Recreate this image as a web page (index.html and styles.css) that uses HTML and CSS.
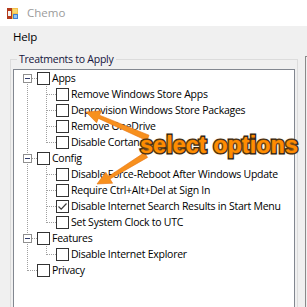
FILE: index.html
```html
<!DOCTYPE html>
<html>
<head>
<meta charset="utf-8">
<title>Chemo</title>
<link rel="stylesheet" href="styles.css">
</head>
<body>
<div class="window">
  <div class="titlebar">
    <svg class="appicon" width="11" height="11" viewBox="0 0 11 11">
      <rect x="0" y="0" width="11" height="11" fill="#f2c14e"/>
      <rect x="0" y="0" width="5" height="11" fill="#b33a1c"/>
      <rect x="1" y="3" width="3" height="5" fill="#f4f4f4"/>
      <rect x="6" y="1" width="4" height="4" fill="#f8d870"/>
      <rect x="6" y="6" width="5" height="5" fill="#3f7fd0"/>
      <rect x="7" y="7" width="3" height="3" fill="#8fc3f2"/>
    </svg>
    <span class="title">Chemo</span>
  </div>
  <div class="menubar"><span class="menu-item">Help</span></div>
  <div class="client">
    <fieldset class="group">
      <legend class="group-title">Treatments to Apply</legend>
      <div class="tree">
        <div class="row">
          <span class="g v-bot h"><span class="exp"></span></span>
          <span class="cb"></span><span class="lbl">Apps</span>
        </div>
        <div class="row">
          <span class="g v-full"></span><span class="g v-full h"></span>
          <span class="cb"></span><span class="lbl">Remove Windows Store Apps</span>
        </div>
        <div class="row">
          <span class="g v-full"></span><span class="g v-full h"></span>
          <span class="cb"></span><span class="lbl">Deprovision Windows Store Packages</span>
        </div>
        <div class="row">
          <span class="g v-full"></span><span class="g v-full h"></span>
          <span class="cb"></span><span class="lbl">Remove OneDrive</span>
        </div>
        <div class="row">
          <span class="g v-full"></span><span class="g v-top h"></span>
          <span class="cb"></span><span class="lbl">Disable Cortana</span>
        </div>
        <div class="row">
          <span class="g v-full h"><span class="exp"></span></span>
          <span class="cb"></span><span class="lbl">Config</span>
        </div>
        <div class="row">
          <span class="g v-full"></span><span class="g v-full h"></span>
          <span class="cb"></span><span class="lbl">Disable Force-Reboot After Windows Update</span>
        </div>
        <div class="row">
          <span class="g v-full"></span><span class="g v-full h"></span>
          <span class="cb"></span><span class="lbl">Require Ctrl+Alt+Del at Sign In</span>
        </div>
        <div class="row">
          <span class="g v-full"></span><span class="g v-full h"></span>
          <span class="cb checked"><svg width="11" height="11" viewBox="0 0 11 11"><path d="M1.5 5.5 L4.2 8.2 L9.5 2.5" fill="none" stroke="#3c3c3c" stroke-width="1.2"/></svg></span><span class="lbl">Disable Internet Search Results in Start Menu</span>
        </div>
        <div class="row">
          <span class="g v-full"></span><span class="g v-top h"></span>
          <span class="cb"></span><span class="lbl">Set System Clock to UTC</span>
        </div>
        <div class="row">
          <span class="g v-full h"><span class="exp"></span></span>
          <span class="cb"></span><span class="lbl">Features</span>
        </div>
        <div class="row">
          <span class="g v-full"></span><span class="g v-top h"></span>
          <span class="cb"></span><span class="lbl">Disable Internet Explorer</span>
        </div>
        <div class="row">
          <span class="g v-top h"></span>
          <span class="cb"></span><span class="lbl">Privacy</span>
        </div>
      </div>
    </fieldset>
    <div class="side"></div>
  </div>
  <svg class="arrows" width="307" height="307" viewBox="0 0 307 307">
    <polygon points="86,112 101.4,110.8 99.6,115.2 149,135.2 147,140.8 98.4,118.4 96.6,122.8" fill="#f7901e" stroke="#e87410" stroke-width="0.6"/>
    <polygon points="97,184 112.6,183.2 110,179 147.6,157.4 144.4,152.6 108.4,176.4 105.8,172.2" fill="#f7901e" stroke="#e87410" stroke-width="0.6"/>
  </svg>
  <div class="callout">select options</div>
</div>
</body>
</html>
```

FILE: styles.css
```css
html, body {
  margin: 0;
  padding: 0;
}
body {
  width: 307px;
  height: 307px;
  overflow: hidden;
  background: #f0f0f0;
  font-family: "Open Sans", "Liberation Sans", Arial, sans-serif;
}
.window {
  position: relative;
  width: 307px;
  height: 307px;
  overflow: hidden;
  background: #f0f0f0;
}
.titlebar {
  height: 26px;
  background: #ffffff;
  display: flex;
  align-items: center;
  padding-left: 7px;
  box-sizing: border-box;
}
.appicon {
  display: block;
  flex: none;
}
.title {
  margin-left: 9px;
  font-size: 11.5px;
  color: #9b9b9b;
  line-height: 14px;
}
.menubar {
  height: 22px;
  display: flex;
  align-items: center;
  padding-left: 13px;
  box-sizing: border-box;
}
.menu-item {
  font-size: 11.5px;
  letter-spacing: -0.2px;
  color: #000;
  line-height: 14px;
}
.client {
  display: flex;
  align-items: flex-start;
  padding-left: 10px;
}
.group {
  flex: none;
  width: 288px;
  height: 280px;
  box-sizing: border-box;
  margin: 5px 0 0 0;
  padding: 0 2px 0 2px;
  border: 1px solid #dcdcdc;
  min-width: 0;
}
.group-title {
  font-size: 10.5px;
  letter-spacing: -0.25px;
  line-height: 13px;
  color: #14143c;
  padding: 0 2px;
  margin-left: 4px;
}
.side {
  flex: none;
  margin-left: 7px;
  margin-top: 8px;
  width: 20px;
  height: 260px;
  border-left: 1px solid #8a8a8a;
  border-top: 1px solid #8a8a8a;
  box-sizing: border-box;
}
.tree {
  margin-top: 3px;
  width: 282px;
  height: 260px;
  box-sizing: border-box;
  border: 1px solid #828790;
  background: #ffffff;
  padding: 0 0 0 4px;
}
.row {
  height: 16px;
  display: flex;
  align-items: center;
}
.g {
  position: relative;
  flex: none;
  width: 19px;
  height: 16px;
}
.v-full::before,
.v-top::before,
.v-bot::before {
  content: "";
  position: absolute;
  left: 9px;
  width: 1px;
  background: repeating-linear-gradient(to bottom, #a0a0a0 0 1px, transparent 1px 2px);
}
.v-full::before { top: 0; height: 16px; }
.v-top::before { top: 0; height: 9px; }
.v-bot::before { top: 8px; height: 8px; }
.h::after {
  content: "";
  position: absolute;
  left: 10px;
  top: 8px;
  width: 9px;
  height: 1px;
  background: repeating-linear-gradient(to right, #a0a0a0 0 1px, transparent 1px 2px);
}
.exp {
  position: absolute;
  left: 5px;
  top: 4px;
  width: 9px;
  height: 9px;
  box-sizing: border-box;
  border: 1px solid #8f8f8f;
  background: #fff;
  z-index: 1;
}
.exp::after {
  content: "";
  position: absolute;
  left: 1px;
  top: 3px;
  width: 5px;
  height: 1px;
  background: #2f3a6a;
}
.cb {
  flex: none;
  width: 13px;
  height: 13px;
  box-sizing: border-box;
  border: 1px solid #333333;
  background: #fff;
  display: flex;
  align-items: center;
  justify-content: center;
}
.cb svg {
  display: block;
}
.lbl {
  margin-left: 2px;
  font-family: "Open Sans", "Liberation Sans", sans-serif;
  font-size: 10.5px;
  letter-spacing: -0.25px;
  line-height: 13px;
  color: #000;
  white-space: nowrap;
}
.arrows {
  position: absolute;
  left: 0;
  top: 0;
  pointer-events: none;
}
.callout {
  position: absolute;
  left: 140px;
  top: 134px;
  font-family: "Liberation Sans", Arial, sans-serif;
  font-weight: bold;
  font-size: 23.5px;
  line-height: 23px;
  color: #ff8c00;
  -webkit-text-stroke: 3px #111;
  paint-order: stroke fill;
  text-shadow: 0 0 3px #ff9a20;
  white-space: nowrap;
}
```
